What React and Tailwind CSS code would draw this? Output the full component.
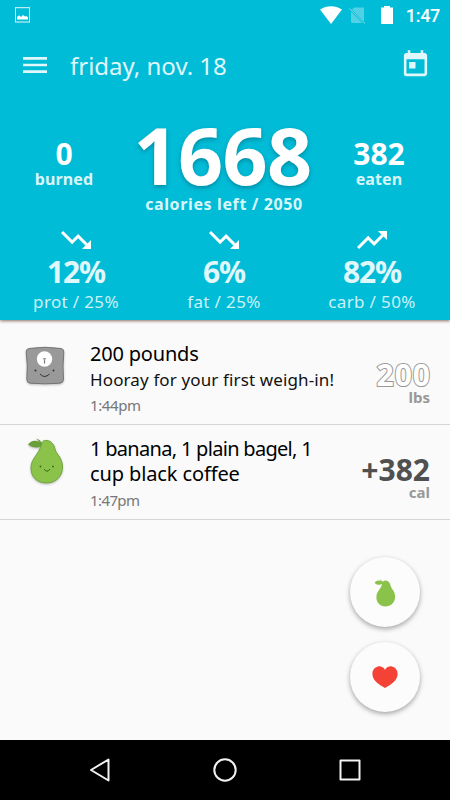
import React from 'react';
import { MdTrendingDown, MdTrendingUp, MdMenu, MdToday } from 'react-icons/md';

const PEAR = 'M14 7 C14.500 3.500 17 2 20 2.500 C24.500 3 27 6.500 28 11 C29 16 35 19 35.500 28 C36 38 29 45 19.500 45 C10 45 4 39 4 30 C4 20 12 17 14 7Z';
const LEAF = 'M14.500 8 C10 10.500 5 10 1 6.500 C4 2.500 8 1.500 12.500 4 L9 0.500 L12.500 2 L15 5Z';

function Status() {
  return (
    <div className="flex h-[30px] items-center text-white">
      <svg className="ml-[15px] h-4 w-[15px]" viewBox="0 0 15 16" fill="none">
        <rect x="0.500" y="0.700" width="14" height="14.300" stroke="#e4f8fb" />
        <path d="M2 12.500V10l1-1 1.500-.5 1.500 1.500 2-2 2 1.500 1.500-.5L13 10.500v2Z" fill="white" />
      </svg>
      <svg className="ml-auto h-[18px] w-[22px]" viewBox="0 0 22 18">
        <path d="M0 3.500C6.500-1 15.500-1 22 3.500L11 18Z" fill="white" />
      </svg>
      <svg className="ml-[7px] h-[17px] w-[17px]" viewBox="0 0 17 17">
        <path d="M5 .5h10v14L3 2.500Z M2 4.500L13.500 16H3.500Q2 16 2 14.500Z" fill="white" fillOpacity=".32" />
        <path d="M.5 1.500 16 16.500" stroke="#7fdbe9" strokeWidth="1" />
      </svg>
      <svg className="ml-[15px] h-[18px] w-3" viewBox="0 0 12 18">
        <path d="M0 1.500h3V0h6v1.500h3v16.500H0Z" fill="white" />
      </svg>
      <span className="mr-[10px] ml-[13px] pt-px font-['Roboto',sans-serif] text-[18px] leading-[30px] font-medium tracking-[-0.3px]">1:47</span>
    </div>
  );
}

function Side({ value, label, className }) {
  return (
    <div className={`flex w-[100px] flex-col items-center pt-[15px] font-bold ${className}`}>
      <span className="text-[30px] leading-[30px] text-white">{value}</span>
      <span className="text-[16px] leading-5 tracking-[0.1px] text-[#d9f6fa]">{label}</span>
    </div>
  );
}

function Macro({ Icon, value, label }) {
  return (
    <div className="flex flex-col items-center">
      <Icon className="size-9 text-white" />
      <span className="-mt-px text-[30px] leading-[30px] font-bold tracking-[-1.2px] text-[#e0f7fb]">{value}</span>
      <span className="mt-[5px] text-[17px] leading-5 tracking-[0.35px] text-[#ccf2f8]">{label}</span>
    </div>
  );
}

function Amount({ value, unit, valueClass, className }) {
  return (
    <div className={`ml-auto flex shrink-0 flex-col items-end pr-5 font-bold ${className}`}>
      <span className={`text-[30px] leading-[30px] ${valueClass}`}>{value}</span>
      <span className="-mt-0.5 text-[15px] leading-[18px] text-[#999]">{unit}</span>
    </div>
  );
}

export default function App() {
  return (
    <div className="relative flex h-[800px] w-[450px] flex-col overflow-hidden bg-[#fafafa] font-['Noto_Sans',sans-serif]">
      <header className="z-10 h-80 shrink-0 bg-[#00bcd7] shadow-[0_1px_3px_rgba(90,50,40,0.7)]">
        <Status />
        <div className="flex h-[70px] items-center pr-5 pl-[19px] text-[#e0f7fb]">
          <MdMenu className="size-8" />
          <h1 className="ml-[19px] pt-px text-[24px] leading-8">friday, nov. 18</h1>
          <MdToday className="mr-[-1px] ml-auto size-[31px] -mt-0.5" />
        </div>
        <div className="flex h-[122px] pt-6">
          <Side value="0" label="burned" className="ml-[14px]" />
          <div className="flex w-[220px] flex-col items-center font-bold">
            <span className="-ml-[3px] pt-px text-[79px] leading-[60px] tracking-[-0.7px] text-white [text-shadow:0_2px_4px_rgba(0,80,100,0.45)]">1668</span>
            <span className="mt-[9px] text-[16px] leading-5 tracking-[0.62px] text-[#d9f6fa]">calories left / 2050</span>
          </div>
          <Side value="382" label="eaten" className="-ml-[5px]" />
        </div>
        <div className="ml-0.5 grid w-[444px] grid-cols-3">
          <Macro Icon={MdTrendingDown} value="12%" label="prot / 25%" />
          <Macro Icon={MdTrendingDown} value="6%" label="fat / 25%" />
          <Macro Icon={MdTrendingUp} value="82%" label="carb / 50%" />
        </div>
      </header>

      <section className="flex h-[105px] shrink-0 border-b border-[#d6d6d6]">
        <svg className="mt-[25px] ml-[23px] h-[44px] w-[44px] shrink-0 drop-shadow-[0_1px_1px_rgba(0,0,0,0.25)]" viewBox="0 0 44 44">
          <path d="M6 3.500Q22 1 38 3.500Q41 4 40.800 7Q39.500 21 40.500 34Q40.500 38 37 38.200Q22 39.500 7 38.200Q4 38 3.800 34Q5 20 3.200 7Q3 4 6 3.500Z" fill="#999" stroke="#666" strokeWidth=".8" />
          <circle cx="21.500" cy="14" r="7.700" fill="white" />
          <path d="M21.500 18.500v-4" stroke="#777" strokeWidth="1.200" />
          <path d="M19.800 13h3.400l-1.700 3Z" fill="#999" />
          <circle cx="12.500" cy="25.500" r="1" fill="#333" />
          <circle cx="30.500" cy="25.500" r="1" fill="#333" />
          <path d="M17 29Q21.500 34 26.500 29" fill="none" stroke="#333" />
        </svg>
        <div className="mt-[21px] ml-[23px] w-[265px] whitespace-nowrap text-black">
          <p className="text-[20px] leading-[26px] tracking-[-0.2px]">200 pounds</p>
          <p className="mt-px text-[17px] leading-6 tracking-[0.13px] text-[#111]">Hooray for your first weigh-in!</p>
          <p className="mt-[3px] text-[15px] leading-5 tracking-[-0.4px] text-[#777]">1:44pm</p>
        </div>
        <Amount value="200" unit="lbs" className="mt-10" valueClass="tracking-[1px] -mr-px text-white [-webkit-text-stroke:2px_#999] [paint-order:stroke_fill]" />
      </section>

      <section className="flex h-[95px] shrink-0 border-b border-[#d6d6d6]">
        <svg className="mt-[13px] ml-[27px] h-[46px] w-[37px] shrink-0 drop-shadow-[0_1px_1px_rgba(0,0,0,0.25)]" viewBox="0 0 37 46">
          <path d={PEAR} fill="#8bc34a" stroke="#689f38" strokeWidth=".9" />
          <path d={LEAF} fill="#689f38" />
          <circle cx="13.500" cy="28.500" r=".9" fill="#33691e" />
          <circle cx="26" cy="28.500" r=".9" fill="#33691e" />
          <path d="M17 31Q20 35.500 23 31" fill="none" stroke="#33691e" />
        </svg>
        <div className="mt-[11px] ml-[26px] w-[265px] whitespace-nowrap text-black">
          <p className="text-[20px] leading-[25px] tracking-[-0.7px]">1 banana, 1 plain bagel, 1</p>
          <p className="text-[20px] leading-[25px] tracking-[-0.12px]">cup black coffee</p>
          <p className="mt-1 text-[15px] leading-5 tracking-[-0.6px] text-[#777]">1:47pm</p>
        </div>
        <Amount value="+382" unit="cal" className="mt-[30px] -ml-5" valueClass="text-[#505050]" />
      </section>

      <div className="absolute right-[30px] bottom-[88px] flex flex-col gap-[15px]">
        <button className="flex size-[70px] items-center justify-center rounded-full bg-[#fcfcfc] shadow-[0_2px_5px_rgba(0,0,0,0.35)]">
          <svg className="mt-px h-[28px] w-[22px]" viewBox="0 0 37 46" preserveAspectRatio="none">
            <path d={PEAR + LEAF} fill="#8bc34a" />
          </svg>
        </button>
        <button className="flex size-[70px] items-center justify-center rounded-full bg-[#fcfcfc] shadow-[0_2px_5px_rgba(0,0,0,0.35)]">
          <svg className="h-[22px] w-[26px]" viewBox="0 0 26 22">
            <path d="M13 3.800C11 .5 8 0 6 .5C1.500 1.500-.5 6 .8 10.500C2 15 6 18 13 22C20 18 24 15 25.200 10.500C26.500 6 24.500 1.500 20 .5C18 0 15 .5 13 3.800Z" fill="#f44336" />
          </svg>
        </button>
      </div>

      <nav className="mt-auto flex h-[60px] shrink-0 items-center justify-between bg-black px-[88px]">
        <svg className="size-6" viewBox="0 0 24 24" fill="none" stroke="#f2f2f2" strokeWidth="2" strokeLinejoin="round">
          <path d="M20.500 1.500v21L3 12Z" />
        </svg>
        <svg className="size-6" viewBox="0 0 24 24" fill="none" stroke="#f2f2f2" strokeWidth="2">
          <circle cx="12" cy="12" r="10.700" />
        </svg>
        <svg className="size-6" viewBox="0 0 24 24" fill="none" stroke="#f2f2f2" strokeWidth="2" strokeLinejoin="round">
          <rect x="2.500" y="2.500" width="19" height="19" />
        </svg>
      </nav>
    </div>
  );
}
